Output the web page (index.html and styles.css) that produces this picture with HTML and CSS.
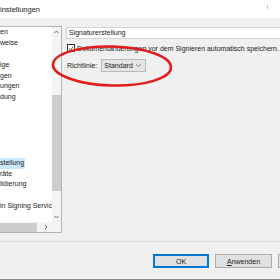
FILE: index.html
```html
<!DOCTYPE html>
<html>
<head>
<meta charset="utf-8">
<link rel="stylesheet" href="styles.css">
</head>
<body>
<div class="window">
  <div class="titlebar">
    <span class="title">instellungen</span>
    <span class="close"></span>
  </div>
  <div class="main">
    <div class="list">
      <div class="items">
        <div class="item">en</div>
        <div class="item">weise</div>
        <div class="item"></div>
        <div class="item">ige</div>
        <div class="item">gen</div>
        <div class="item">ungen</div>
        <div class="item">dung</div>
        <div class="item"></div>
        <div class="item"></div>
        <div class="item"></div>
        <div class="item"></div>
        <div class="item"></div>
        <div class="item"><span class="sel">stellung</span></div>
        <div class="item">räte</div>
        <div class="item">lidierung</div>
        <div class="item"></div>
        <div class="item">in Signing Servic</div>
      </div>
      <div class="vscroll">
        <svg class="arrow" width="9" height="10" viewBox="0 0 9 10"><path d="M2.5 6 L4.5 4 L6.5 6" fill="none" stroke="#606060" stroke-width="0.9"/></svg>
        <div class="vtrack"><div class="vthumb"></div></div>
        <svg class="arrow" width="9" height="10" viewBox="0 0 9 10"><path d="M2.5 4 L4.5 6 L6.5 4" fill="none" stroke="#606060" stroke-width="0.9"/></svg>
      </div>
      <div class="hscroll">
        <div class="hthumb"></div>
        <svg class="harrow" width="10" height="10" viewBox="0 0 10 10"><path d="M4 3 L6 5 L4 7" fill="none" stroke="#606060" stroke-width="0.9"/></svg>
      </div>
      <div class="corner"></div>
    </div>
    <div class="panel">
      <div class="header">Signaturerstellung</div>
      <div class="checkrow">
        <span class="checkbox"><svg width="7" height="7" viewBox="0 0 7 7"><path d="M1 3.6 L2.8 5.3 L6 1.5" fill="none" stroke="#222" stroke-width="0.9"/></svg></span>
        <span class="label">Dokumentänderungen vor dem Signieren automatisch speichern.</span>
      </div>
      <div class="policyrow">
        <span class="label">Richtlinie:</span>
        <span class="select">Standard<svg width="7" height="5" viewBox="0 0 7 5"><path d="M1 1.2 L3.5 3.6 L6 1.2" fill="none" stroke="#777" stroke-width="0.9"/></svg></span>
      </div>
    </div>
  </div>
  <div class="footer">
    <button class="btn default">OK</button>
    <button class="btn"><u>A</u>nwenden</button>
    <button class="btn"></button>
  </div>
  <svg class="annotation" width="280" height="280" viewBox="0 0 280 280">
    <ellipse cx="112" cy="66" rx="59" ry="19.5" transform="rotate(1.5 112 66)" fill="none" stroke="#e31b1b" stroke-width="2.6"/>
  </svg>
</div>
</body>
</html>
```

FILE: styles.css
```css
* { box-sizing: border-box; }
html, body { margin: 0; padding: 0; }
body {
  width: 280px;
  height: 280px;
  overflow: hidden;
  font-family: "Liberation Sans", Arial, sans-serif;
  font-size: 7px;
  color: #1a1a1a;
  background: #f0f0f0;
}
.window {
  position: relative;
  width: 280px;
  height: 280px;
  overflow: hidden;
  display: flex;
  flex-direction: column;
  border-bottom: 1px solid #8a8a8a;
}
.titlebar {
  height: 18px;
  background: #ffffff;
  display: flex;
  align-items: center;
  justify-content: space-between;
  font-size: 7.5px;
  color: #222;
}
.close {
  width: 1px;
  height: 4px;
  margin-right: 12px;
  margin-bottom: 4px;
  background: #c8c8c8;
}
.main {
  height: 224px;
  display: flex;
  padding-top: 8px;
  border-bottom: 1px solid #dcdcdc;
}
.list {
  width: 62px;
  height: 207px;
  flex: none;
  background: #ffffff;
  border: 1px solid #b4b4b4;
  border-left: none;
  display: grid;
  grid-template-columns: 52px 9px;
  grid-template-rows: 1fr 10px;
}
.items {
  overflow: hidden;
  white-space: nowrap;
}
.item {
  height: 10.9px;
  line-height: 10.9px;
}
.sel {
  background: #cce8ff;
  display: inline-block;
  padding-right: 1px;
}
.vscroll {
  display: flex;
  flex-direction: column;
  background: #f4f4f4;
}
.arrow { display: block; flex: none; }
.vtrack {
  flex: 1;
  padding-top: 58px;
  padding-bottom: 2px;
}
.vthumb {
  width: 9px;
  height: 96px;
  background: #cdcdcd;
}
.hscroll {
  display: flex;
  align-items: center;
  background: #f4f4f4;
}
.hthumb {
  width: 37px;
  height: 9px;
  background: #cdcdcd;
}
.harrow { margin-left: 4px; }
.corner { background: #f4f4f4; }
.panel {
  flex: 1;
  min-width: 0;
  overflow: hidden;
  margin-left: 4px;
  padding-top: 1px;
  display: flex;
  flex-direction: column;
}
.header {
  height: 12px;
  line-height: 10px;
  background: #ffffff;
  border: 1px solid #d4d4d4;
  border-right: none;
  padding-left: 2px;
}
.checkrow {
  display: flex;
  align-items: center;
  margin-top: 5px;
  white-space: nowrap;
}
.checkbox {
  flex: none;
  width: 8px;
  height: 8px;
  border: 1px solid #333;
  background: #fff;
  margin-left: 1px;
  margin-right: 2px;
  display: flex;
  align-items: center;
  justify-content: center;
}
.checkbox svg { display: block; }
.policyrow {
  display: flex;
  align-items: center;
  margin-top: 7px;
}
.policyrow .label { margin-left: 1px; }
.select {
  margin-left: 4px;
  width: 45px;
  height: 13px;
  background: #e5e5e5;
  border: 1px solid #b9b9b9;
  display: flex;
  align-items: center;
  justify-content: space-between;
  padding: 0 3px 0 2px;
}
.footer {
  flex: 1;
  min-width: 0;
  overflow: hidden;
  display: flex;
  align-items: flex-start;
  padding-top: 12px;
  padding-left: 153px;
  gap: 6px;
}
.btn {
  flex: none;
  width: 57px;
  height: 14px;
  background: #e1e1e1;
  border: 1px solid #adadad;
  font-family: "Liberation Sans", Arial, sans-serif;
  font-size: 7px;
  color: #1a1a1a;
  padding: 0;
}
.btn u { text-decoration: underline; }
.btn.default {
  border: 1px solid #0078d7;
  box-shadow: inset 0 0 0 1px #0078d7;
  width: 56px;
}
.annotation {
  position: absolute;
  left: 0;
  top: 0;
  pointer-events: none;
}
```
